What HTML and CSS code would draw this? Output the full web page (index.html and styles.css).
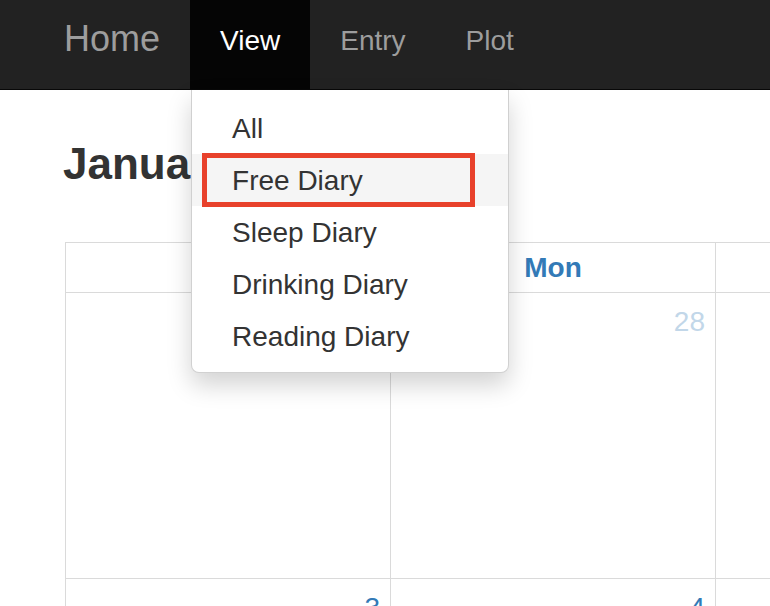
FILE: index.html
```html
<!DOCTYPE html>
<html lang="en">
<head>
<meta charset="utf-8">
<title>Diary Calendar</title>
<link rel="stylesheet" href="styles.css">
</head>
<body>
<nav class="navbar">
  <a class="brand" href="#">Home</a>
  <ul class="nav">
    <li class="nav-item active">
      <a class="nav-link" href="#">View</a>
      <ul class="dropdown">
        <li><a class="dd-link" href="#">All</a></li>
        <li class="hover"><a class="dd-link" href="#">Free Diary</a><span class="mark"></span></li>
        <li><a class="dd-link" href="#">Sleep Diary</a></li>
        <li><a class="dd-link" href="#">Drinking Diary</a></li>
        <li><a class="dd-link" href="#">Reading Diary</a></li>
      </ul>
    </li>
    <li class="nav-item"><a class="nav-link" href="#">Entry</a></li>
    <li class="nav-item"><a class="nav-link" href="#">Plot</a></li>
  </ul>
</nav>
<main class="content">
  <h1 class="title">January 2016</h1>
  <div class="cal">
    <div class="hd">Sun</div><div class="hd">Mon</div><div class="hd">Tue</div><div class="hd">Wed</div><div class="hd">Thu</div><div class="hd">Fri</div><div class="hd">Sat</div>
    <div class="day other">27</div><div class="day other">28</div><div class="day other">29</div><div class="day other">30</div><div class="day other">31</div><div class="day">1</div><div class="day">2</div>
    <div class="day">3</div><div class="day">4</div><div class="day">5</div><div class="day">6</div><div class="day">7</div><div class="day">8</div><div class="day">9</div>
  </div>
</main>
</body>
</html>
```
FILE: styles.css
```css
html, body {
  margin: 0;
  padding: 0;
  overflow: hidden;
  background: #fff;
}
body {
  font-family: "Liberation Sans", Arial, Helvetica, sans-serif;
  color: #333;
}
a { text-decoration: none; }

.navbar {
  display: flex;
  height: 89px;
  background: #222;
  border-bottom: 1px solid #080808;
  padding-left: 64px;
}
.brand {
  display: block;
  font-size: 36px;
  line-height: 40px;
  padding: 19px 30px 0 0;
  color: #9d9d9d;
}
.nav {
  display: flex;
  list-style: none;
  margin: 0;
  padding: 0;
}
.nav-item {
  position: relative;
}
.nav-link {
  display: block;
  height: 89px;
  box-sizing: border-box;
  padding: 21px 30px 0;
  font-size: 28px;
  line-height: 40px;
  color: #9d9d9d;
}
.nav-item.active .nav-link {
  background: #050505;
  color: #fff;
}

.dropdown {
  position: absolute;
  top: 90px;
  left: 1px;
  width: 318px;
  box-sizing: border-box;
  margin: 0;
  padding: 12px 0 10px;
  list-style: none;
  background: #fff;
  border: 1px solid rgba(0, 0, 0, 0.18);
  border-top: 0;
  border-radius: 0 0 8px 8px;
  box-shadow: 0 12px 24px rgba(0, 0, 0, 0.175);
  z-index: 10;
}
.dropdown li {
  position: relative;
}
.dd-link {
  display: block;
  padding: 7px 40px 5px;
  font-size: 28px;
  line-height: 40px;
  color: #333;
  white-space: nowrap;
}
.dropdown li.hover {
  background: #f5f5f5;
}
.mark {
  position: absolute;
  left: 10px;
  top: -1px;
  width: 273px;
  height: 54px;
  box-sizing: border-box;
  border: 5px solid #e8412b;
}

.content {
  padding: 50px 0 0 63px;
}
.title {
  margin: 0;
  font-size: 44px;
  line-height: 48px;
  font-weight: bold;
  color: #333;
  white-space: nowrap;
}
.cal {
  margin: 54px 0 0 2px;
  display: grid;
  grid-template-columns: repeat(7, 325px);
  width: max-content;
  border-left: 1px solid #dadada;
  border-top: 1px solid #dadada;
}
.hd, .day {
  box-sizing: border-box;
  border-right: 1px solid #dadada;
  border-bottom: 1px solid #dadada;
}
.hd {
  height: 50px;
  font-size: 28px;
  line-height: 49px;
  font-weight: bold;
  text-align: center;
  color: #337ab7;
}
.day {
  height: 286px;
  padding: 13px 10px 0 0;
  font-size: 28px;
  line-height: 32px;
  text-align: right;
  color: #337ab7;
}
.day.other {
  color: #c2d7e9;
}
```
